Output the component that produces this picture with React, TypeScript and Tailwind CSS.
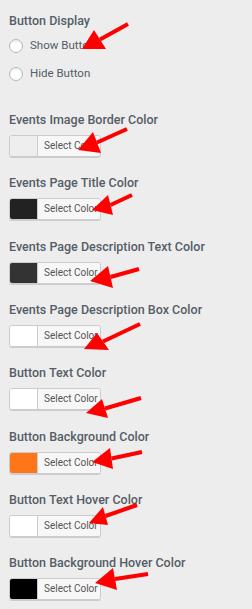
import React from "react";

type Arrow = { tail: [number, number]; tip: [number, number]; a: [number, number]; b: [number, number] };

const arrows: Arrow[] = [
  { tail: [128, 24], tip: [82, 49], a: [94, 30], b: [106, 49] },
  { tail: [127, 129], tip: [78, 150], a: [93, 132], b: [101, 153] },
  { tail: [132, 195], tip: [92, 210], a: [108, 195], b: [113, 215] },
  { tail: [139, 269], tip: [90, 281], a: [108, 266], b: [113, 288] },
  { tail: [140, 324], tip: [84, 349], a: [97, 333], b: [109, 350] },
  { tail: [141, 398], tip: [86, 413], a: [102, 399], b: [108, 418] },
  { tail: [142, 452], tip: [92, 462], a: [110, 448], b: [113, 469] },
  { tail: [137, 505], tip: [89, 523], a: [103, 507], b: [108, 525] },
  { tail: [148, 574], tip: [95, 583], a: [113, 568], b: [117, 590] },
];

const fields: { label: string; color: string }[] = [
  { label: "Events Image Border Color", color: "#eeeeee" },
  { label: "Events Page Title Color", color: "#222222" },
  { label: "Events Page Description Text Color", color: "#333333" },
  { label: "Events Page Description Box Color", color: "#ffffff" },
  { label: "Button Text Color", color: "#ffffff" },
  { label: "Button Background Color", color: "#ff7619" },
  { label: "Button Text Hover Color", color: "#ffffff" },
  { label: "Button Background Hover Color", color: "#000000" },
];

function Radio({ label }: { label: string }) {
  return (
    <div className="flex items-center h-[28px]">
      <span className="w-[14px] h-[14px] rounded-full bg-white border border-[#b4b9be] shadow-[inset_0_1px_2px_rgba(0,0,0,0.1)]" />
      <span className="ml-[7px] text-[11.5px] text-[#555d66]">{label}</span>
    </div>
  );
}

export default function App() {
  return (
    <div
      className="relative w-[252px] h-[609px] overflow-hidden bg-[#ededed] pl-[9px]"
      style={{ fontFamily: "Roboto, 'Noto Sans', sans-serif" }}
    >
      <div className="pt-[11px]">
        <div className="h-[20px] leading-[20px] text-[12.5px] font-medium text-[#555d66]">Button Display</div>
        <div className="pt-[1px]">
          <Radio label="Show Button" />
          <Radio label="Hide Button" />
        </div>
      </div>
      <div className="mt-[22px]">
        {fields.map((f) => (
          <div key={f.label} className="h-[63.33px]">
            <div className="h-[20px] leading-[20px] text-[12.5px] font-medium text-[#555d66] whitespace-nowrap">{f.label}</div>
            <div className="mt-[5px] flex w-[92px] h-[22px] rounded-[3px] border border-[#cccccc] shadow-[0_1px_0_#cccccc] overflow-hidden">
              <span className="w-[28px] h-full border-r border-[#cccccc]" style={{ backgroundColor: f.color }} />
              <span className="flex-1 bg-[#f7f7f7] text-[10px] leading-[20px] text-[#555555] pl-[6px] whitespace-nowrap">Select Color</span>
            </div>
          </div>
        ))}
      </div>
      <svg className="absolute left-0 top-0 pointer-events-none" width="252" height="609">
        {arrows.map((ar, i) => {
          const mx = (ar.a[0] + ar.b[0]) / 2;
          const my = (ar.a[1] + ar.b[1]) / 2;
          return (
            <g key={i} fill="#ff0000" stroke="#ff0000">
              <line x1={ar.tail[0]} y1={ar.tail[1]} x2={mx} y2={my} strokeWidth={4} />
              <polygon points={`${ar.tip[0]},${ar.tip[1]} ${ar.a[0]},${ar.a[1]} ${ar.b[0]},${ar.b[1]}`} strokeWidth={0} />
            </g>
          );
        })}
      </svg>
    </div>
  );
}
